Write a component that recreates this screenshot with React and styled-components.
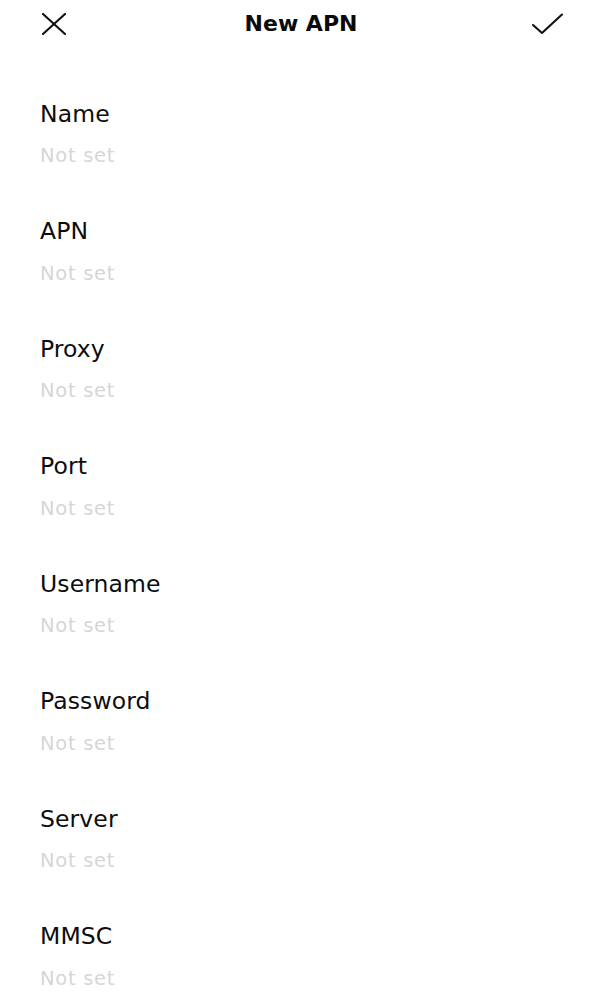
import React from "react";
import styled, { createGlobalStyle } from "styled-components";

const Global = createGlobalStyle`
  html, body { margin: 0; padding: 0; background: #fff; }
  body { font-family: "DejaVu Sans", "Liberation Sans", Arial, sans-serif; color: #000; }
`;

const Page = styled.div`
  width: 600px;
  min-height: 1000px;
  background: #fff;
`;

const Header = styled.header`
  height: 48px;
  display: grid;
  grid-template-columns: 1fr auto 1fr;
  align-items: center;
  padding: 0 36px 0 38px;
`;

const IconButton = styled.button`
  border: 0;
  background: none;
  padding: 0;
  margin: 0 0 0 ${(p) => p.$offset || 0}px;
  display: flex;
  justify-self: ${(p) => (p.$end ? "end" : "start")};
  color: #111;
`;

const Title = styled.h1`
  margin: 0;
  font-size: 22px;
  font-weight: 700;
  line-height: 48px;
  color: #0a0a0a;
`;

const List = styled.div`
  padding-top: 28px;
  display: flex;
  flex-direction: column;
`;

const Field = styled.div`
  height: 117.5px;
  box-sizing: border-box;
  padding: 23.5px 40px 0;
  display: flex;
  flex-direction: column;
  gap: 14.5px;
`;

const Label = styled.div`
  font-size: 23.5px;
  line-height: 28px;
  letter-spacing: 0.1px;
  color: #0d0d0d;
`;

const Value = styled.div`
  font-size: 19.5px;
  line-height: 28px;
  letter-spacing: 0.7px;
  color: #d6d6d6;
`;

const fields = ["Name", "APN", "Proxy", "Port", "Username", "Password", "Server", "MMSC"];

export default function App() {
  return (
    <Page>
      <Global />
      <Header>
        <IconButton $offset={4} aria-label="Close">
          <svg width="24" height="22" viewBox="0 0 24 22" fill="none" stroke="currentColor" strokeWidth="2.1" strokeLinecap="round">
            <line x1="1" y1="1" x2="23" y2="21" />
            <line x1="23" y1="1" x2="1" y2="21" />
          </svg>
        </IconButton>
        <Title>New APN</Title>
        <IconButton $end aria-label="Save">
          <svg width="33" height="22" viewBox="0 0 33 22" fill="none" stroke="currentColor" strokeWidth="2.1" strokeLinecap="round" strokeLinejoin="round">
            <polyline points="2,12 11,20 31,1.5" />
          </svg>
        </IconButton>
      </Header>
      <List>
        {fields.map((f) => (
          <Field key={f}>
            <Label>{f}</Label>
            <Value>Not set</Value>
          </Field>
        ))}
      </List>
    </Page>
  );
}
